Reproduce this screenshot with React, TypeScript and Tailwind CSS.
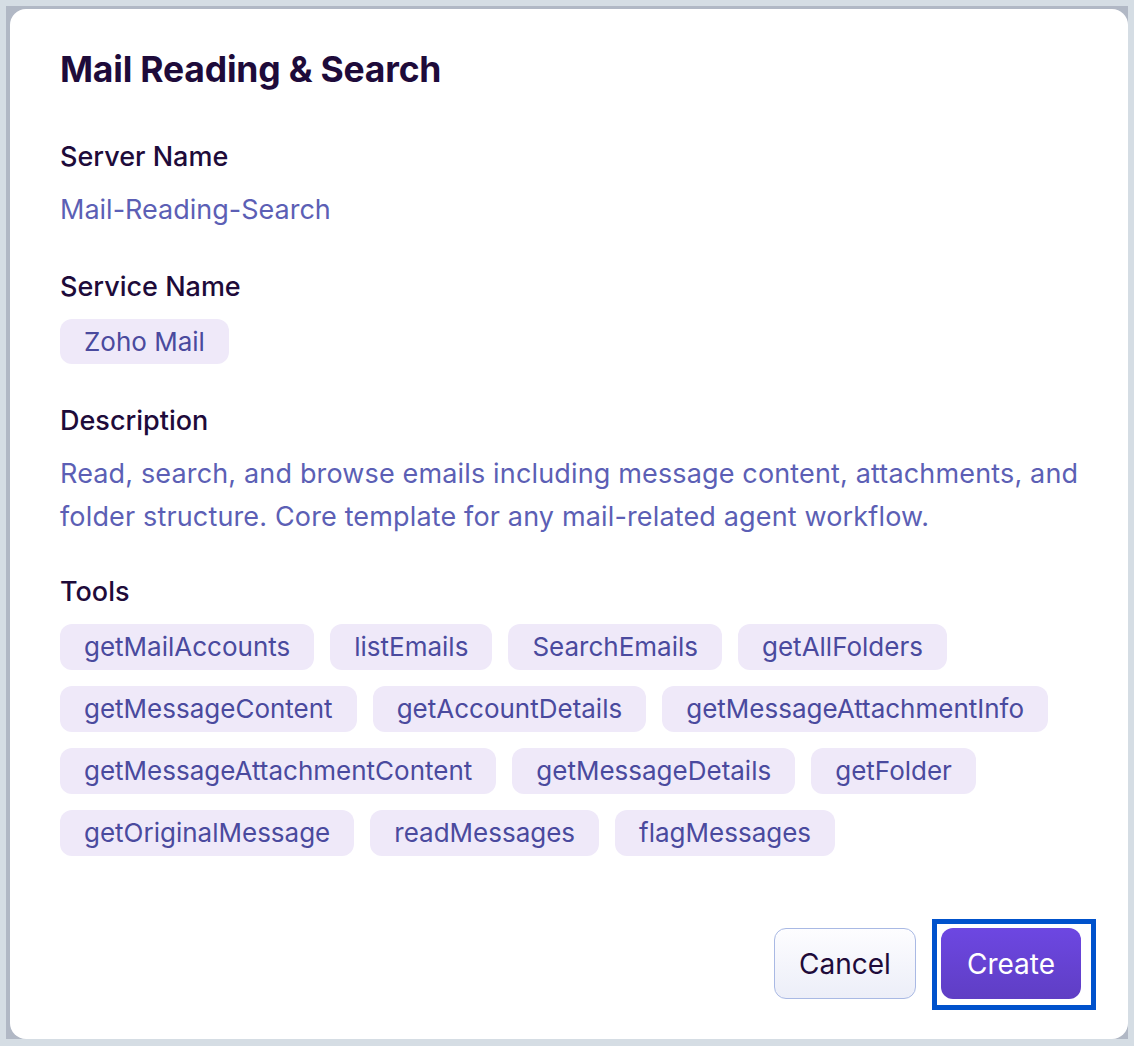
import type { ReactNode } from 'react';

const tools = [
  'getMailAccounts',
  'listEmails',
  'SearchEmails',
  'getAllFolders',
  'getMessageContent',
  'getAccountDetails',
  'getMessageAttachmentInfo',
  'getMessageAttachmentContent',
  'getMessageDetails',
  'getFolder',
  'getOriginalMessage',
  'readMessages',
  'flagMessages',
];

function Label({ children, className = '' }: { children: ReactNode; className?: string }) {
  return (
    <div className={`text-[27px] font-medium leading-[32px] text-[#1e0b3a] ${className}`}>
      {children}
    </div>
  );
}

function Chip({ label, tall = true }: { label: string; tall?: boolean }) {
  return (
    <span
      className={`inline-flex items-center rounded-xl bg-[#efe9f9] px-6 text-[26px] leading-none text-[#4a4a9e] ${
        tall ? 'h-[46px]' : 'h-[45px]'
      }`}
    >
      {label}
    </span>
  );
}

export default function App() {
  return (
    <div className="h-[1046px] bg-[#d5dde4] px-[6px] pt-[6px] font-['Inter',sans-serif]">
      <div className="bg-[#b1b8c5] pl-[4px] pt-[3px]">
        <div className="flex h-[1030px] flex-col rounded-2xl bg-white pl-[50px] pr-[48px] pt-[41px]">
          <h2 className="text-[35.5px] font-bold leading-[40px] tracking-[-0.2px] text-[#1e0b3a]">
            Mail Reading &amp; Search
          </h2>

          <Label className="mt-[51px]">Server Name</Label>
          <div className="mt-[21px] text-[27px] leading-[32px] text-[#5c5fb5]">Mail-Reading-Search</div>

          <Label className="mt-[45px]">Service Name</Label>
          <div className="mt-[16px] flex">
            <Chip label="Zoho Mail" tall={false} />
          </div>

          <Label className="mt-[41px]">Description</Label>
          <p className="mt-[15px] whitespace-nowrap text-[27px] leading-[43px] tracking-[0.15px] text-[#5c5fb5]">
            Read, search, and browse emails including message content, attachments, and
            <br />
            folder structure. Core template for any mail-related agent workflow.
          </p>

          <Label className="mt-[38px]">Tools</Label>
          <div className="mt-[16px] flex flex-wrap gap-4">
            {tools.map(t => (
              <Chip key={t} label={t} />
            ))}
          </div>

          {/* footer actions; Create carries a keyboard focus frame */}
          <div className="mr-[-16px] mt-[63px] flex items-start justify-end gap-4">
            <button className="mt-[9px] h-[71px] w-[142px] rounded-xl border border-[#a9b9e4] bg-gradient-to-b from-[#fdfdff] to-[#eceef8] text-[28px] text-[#1e0b3a]">
              Cancel
            </button>
            <span className="border-[5px] border-[#0052cc] pb-[6px] pl-[4px] pr-[10px] pt-[4px]">
              <button className="block h-[71px] w-[140px] rounded-xl bg-gradient-to-b from-[#6d47e2] to-[#5f3ec4] text-[28px] text-white">
                Create
              </button>
            </span>
          </div>
        </div>
      </div>
    </div>
  );
}
